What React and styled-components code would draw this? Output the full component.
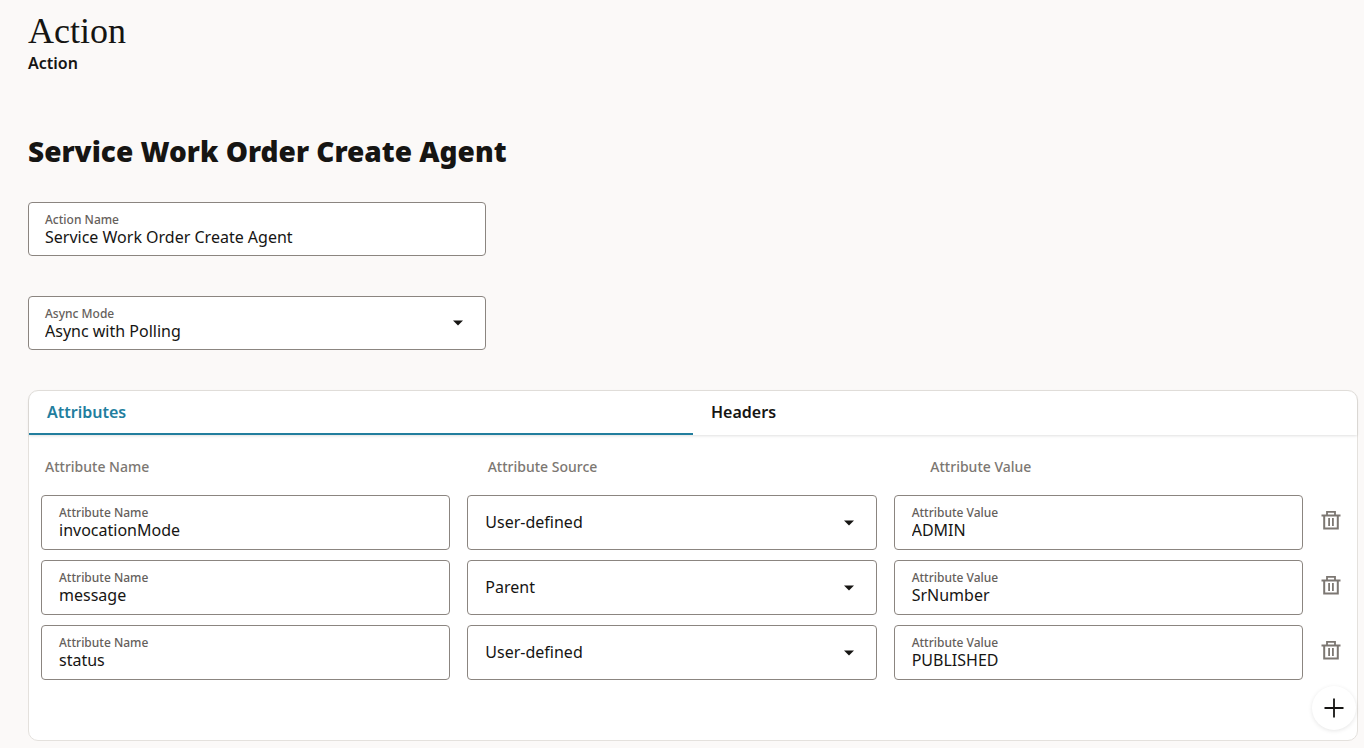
import React, { useState } from 'react';
import styled, { createGlobalStyle } from 'styled-components';

const initialRows = [
  { id: 1, name: 'invocationMode', source: 'User-defined', value: 'ADMIN' },
  { id: 2, name: 'message', source: 'Parent', value: 'SrNumber' },
  { id: 3, name: 'status', source: 'User-defined', value: 'PUBLISHED' },
];

const tabs = ['Attributes', 'Headers'];

const CaretIcon = () => (
  <Caret width="12" height="6" viewBox="0 0 12 6" aria-hidden="true">
    <path d="M1 0.5h10L6 5.5z" fill="currentColor" />
  </Caret>
);

const TrashIcon = () => (
  <svg width="20" height="20" viewBox="0 0 20 20" fill="none" stroke="currentColor" aria-hidden="true">
    <path d="M6 5V1.8h8V5" strokeWidth="1.8" />
    <path d="M0.5 5.5h19" strokeWidth="2" />
    <path d="M3.2 5.5v13h13.6v-13" strokeWidth="2" />
    <path d="M8.1 8v8M11.9 8v8" strokeWidth="1.8" />
  </svg>
);

const PlusIcon = () => (
  <svg width="20" height="20" viewBox="0 0 20 20" aria-hidden="true">
    <path d="M10 0.5v19M0.5 10h19" stroke="currentColor" strokeWidth="1.8" />
  </svg>
);

const App = () => {
  const [actionName, setActionName] = useState('Service Work Order Create Agent');
  const [mode, setMode] = useState('Async with Polling');
  const [activeTab, setActiveTab] = useState('Attributes');
  const [rows, setRows] = useState(initialRows);

  const updateRow = (id, key, text) => {
    setRows(rows.map((row) => (row.id === id ? { ...row, [key]: text } : row)));
  };

  const removeRow = (id) => {
    setRows(rows.filter((row) => row.id !== id));
  };

  const addRow = () => {
    setRows([...rows, { id: Date.now(), name: '', source: 'User-defined', value: '' }]);
  };

  return (
    <Page>
      <GlobalStyle />
      <PageTitle>Action</PageTitle>
      <Subtitle>Action</Subtitle>
      <Heading>Service Work Order Create Agent</Heading>

      <ActionForm>
        <Field>
          <Label htmlFor="action-name">Action Name</Label>
          <Input id="action-name" value={actionName} onChange={(e) => setActionName(e.target.value)} />
        </Field>
        <Field>
          <Label htmlFor="async-mode">Async Mode</Label>
          <Select id="async-mode" value={mode} onChange={(e) => setMode(e.target.value)}>
            <option>Async with Polling</option>
            <option>Sync</option>
          </Select>
          <CaretIcon />
        </Field>
      </ActionForm>

      <Card>
        <TabBar role="tablist">
          {tabs.map((tab) => (
            <Tab
              key={tab}
              type="button"
              role="tab"
              aria-selected={activeTab === tab}
              $active={activeTab === tab}
              onClick={() => setActiveTab(tab)}
            >
              {tab}
            </Tab>
          ))}
        </TabBar>

        <ColumnTitles>
          <span>Attribute Name</span>
          <span>Attribute Source</span>
          <span>Attribute Value</span>
        </ColumnTitles>

        <Rows>
          {rows.map((row) => (
            <Row key={row.id}>
              <RowFields>
                <RowField>
                  <Label htmlFor={`name-${row.id}`}>Attribute Name</Label>
                  <Input
                    id={`name-${row.id}`}
                    value={row.name}
                    onChange={(e) => updateRow(row.id, 'name', e.target.value)}
                  />
                </RowField>
                <RowField>
                  <Select
                    aria-label="Attribute Source"
                    value={row.source}
                    onChange={(e) => updateRow(row.id, 'source', e.target.value)}
                  >
                    <option>User-defined</option>
                    <option>Parent</option>
                  </Select>
                  <CaretIcon />
                </RowField>
                <RowField>
                  <Label htmlFor={`value-${row.id}`}>Attribute Value</Label>
                  <Input
                    id={`value-${row.id}`}
                    value={row.value}
                    onChange={(e) => updateRow(row.id, 'value', e.target.value)}
                  />
                </RowField>
              </RowFields>
              <DeleteButton type="button" aria-label="Delete attribute" onClick={() => removeRow(row.id)}>
                <TrashIcon />
              </DeleteButton>
            </Row>
          ))}
        </Rows>

        <CardFooter>
          <AddButton type="button" aria-label="Add attribute" onClick={addRow}>
            <PlusIcon />
          </AddButton>
        </CardFooter>
      </Card>
    </Page>
  );
};

const GlobalStyle = createGlobalStyle`
  * {
    box-sizing: border-box;
  }

  body {
    margin: 0;
    background-color: #fbf9f8;
    color: #161513;
    font-family: 'Noto Sans', 'Open Sans', sans-serif;
  }

  button, input, select {
    font-family: inherit;
    color: inherit;
  }
`;

const Page = styled.main`
  padding: 10px 6px 7px 28px;
`;

const PageTitle = styled.h1`
  margin: 0;
  font-family: Georgia, 'Liberation Serif', serif;
  font-size: 36px;
  font-weight: 400;
  line-height: 42px;
`;

const Subtitle = styled.p`
  margin: 0;
  font-size: 16px;
  font-weight: 600;
  line-height: 22px;
`;

const Heading = styled.h2`
  margin: 59px 0 33px;
  font-size: 28px;
  font-weight: 900;
  line-height: 36px;
`;

const ActionForm = styled.div`
  display: flex;
  flex-direction: column;
  gap: 40px;
  max-width: 458px;
  margin-bottom: 40px;
`;

const Field = styled.div`
  position: relative;
  display: flex;
  flex: 1 1 0;
  flex-direction: column;
  justify-content: center;
  min-width: 0;
  min-height: 54px;
  padding: 0 16px;
  background-color: #fff;
  border: 1px solid #8b8580;
  border-radius: 4px;
`;

const RowField = styled(Field)`
  min-height: 55px;
  padding: 0 17px 2px;
`;

const Label = styled.label`
  margin-bottom: -2px;
  color: #65605b;
  font-size: 12px;
  font-weight: 500;
  line-height: 18px;
`;

const Input = styled.input`
  width: 100%;
  padding: 0;
  border: none;
  outline: none;
  background: transparent;
  font-size: 16px;
  line-height: 20px;
  height: 20px;
`;

const Select = styled.select`
  width: 100%;
  height: 20px;
  padding: 0;
  border: none;
  outline: none;
  background: transparent;
  appearance: none;
  font-size: 16px;
  line-height: 20px;
  cursor: pointer;
`;

const Caret = styled.svg`
  position: absolute;
  top: 50%;
  right: 21px;
  transform: translateY(-50%);
  pointer-events: none;
`;

const Card = styled.section`
  background-color: #fff;
  border: 1px solid #e4e1dd;
  border-radius: 10px;
`;

const TabBar = styled.div`
  display: flex;
  box-shadow: 0 1px 3px rgba(0, 0, 0, 0.12);
  border-radius: 10px 10px 0 0;
`;

const Tab = styled.button`
  flex: 1;
  height: 44px;
  padding: 0 18px;
  border: none;
  border-bottom: 2px solid ${(props) => (props.$active ? '#227e9e' : 'transparent')};
  background: transparent;
  color: ${(props) => (props.$active ? '#227e9e' : '#161513')};
  font-size: 16px;
  font-weight: 600;
  text-align: left;
  cursor: pointer;
`;

const ColumnTitles = styled.div`
  display: grid;
  grid-template-columns: repeat(3, 1fr);
  padding: 22px 0 18px;
  color: #7c7772;
  font-size: 14px;
  font-weight: 500;
  line-height: 20px;

  span {
    padding-left: 16px;
  }
`;

const Rows = styled.div`
  display: flex;
  flex-direction: column;
  gap: 10px;
  padding: 0 4px 0 12px;
`;

const Row = styled.div`
  display: flex;
  align-items: flex-start;
  gap: 6px;
`;

const RowFields = styled.div`
  display: flex;
  flex: 1;
  gap: 17px;
`;

const DeleteButton = styled.button`
  display: flex;
  align-items: center;
  justify-content: center;
  width: 44px;
  height: 50px;
  padding: 0;
  border: none;
  background: transparent;
  color: #7c7772;
  cursor: pointer;
`;

const CardFooter = styled.div`
  display: flex;
  justify-content: flex-end;
  padding: 6px 1px 10px;
`;

const AddButton = styled.button`
  display: flex;
  align-items: center;
  justify-content: center;
  width: 44px;
  height: 44px;
  padding: 0;
  border: none;
  border-radius: 50%;
  background-color: #fff;
  box-shadow: 0 1px 4px rgba(0, 0, 0, 0.1);
  cursor: pointer;
`;

export default App;
